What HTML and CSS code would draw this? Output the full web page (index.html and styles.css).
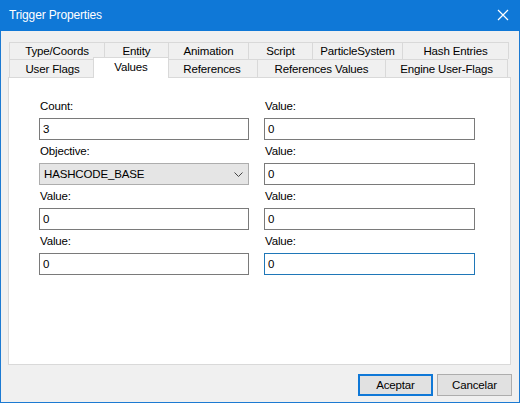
FILE: index.html
```html
<!DOCTYPE html>
<html>
<head>
<meta charset="utf-8">
<link rel="stylesheet" href="styles.css">
</head>
<body>
<div class="window">
  <div class="titlebar">
    <span class="title">Trigger Properties</span>
    <svg class="close" width="12" height="12" viewBox="0 0 12 12"><path d="M1 1 L11 11 M11 1 L1 11" stroke="#fff" stroke-width="1.2" fill="none"/></svg>
  </div>
  <div class="client">
    <div class="tabs">
      <div class="tabrow row1">
        <div class="tab t96">Type/Coords</div>
        <div class="tab t64">Entity</div>
        <div class="tab t80">Animation</div>
        <div class="tab t64">Script</div>
        <div class="tab t90">ParticleSystem</div>
        <div class="tab t106">Hash Entries</div>
      </div>
      <div class="tabrow row2">
        <div class="tab t87">User Flags</div>
        <div class="tab t72 active">Values</div>
        <div class="tab t91">References</div>
        <div class="tab t128">References Values</div>
        <div class="tab t122">Engine User-Flags</div>
      </div>
    </div>
    <div class="panel">
      <div class="grid">
        <div class="field"><div class="label">Count:</div><div class="input">3</div></div>
        <div class="field"><div class="label">Value:</div><div class="input">0</div></div>
        <div class="field"><div class="label">Objective:</div><div class="select"><span>HASHCODE_BASE</span><svg width="9" height="5" viewBox="0 0 9 5"><path d="M0.5 0.5 L4.5 4.5 L8.5 0.5" stroke="#444" stroke-width="1" fill="none"/></svg></div></div>
        <div class="field"><div class="label">Value:</div><div class="input">0</div></div>
        <div class="field"><div class="label">Value:</div><div class="input">0</div></div>
        <div class="field"><div class="label">Value:</div><div class="input">0</div></div>
        <div class="field"><div class="label">Value:</div><div class="input">0</div></div>
        <div class="field"><div class="label">Value:</div><div class="input focus">0</div></div>
      </div>
    </div>
    <div class="buttons">
      <div class="btn default">Aceptar</div>
      <div class="btn">Cancelar</div>
    </div>
  </div>
</div>
</body>
</html>
```

FILE: styles.css
```css
html, body {
  margin: 0;
  padding: 0;
  background: #f0f0f0;
}
body {
  font-family: "Liberation Sans", Arial, sans-serif;
  font-size: 11.5px;
  letter-spacing: -0.15px;
  color: #000;
}
.window {
  width: 520px;
  height: 403px;
  box-sizing: border-box;
  border: 1px solid #1c7ad2;
  border-top: none;
  display: flex;
  flex-direction: column;
  background: #f0f0f0;
}
.titlebar {
  height: 30px;
  flex: none;
  background: #0f78d7;
  color: #fff;
  display: flex;
  align-items: center;
  justify-content: space-between;
  padding: 0 9px 1px 9px;
  margin: 0 -1px;
  font-size: 12px;
}
.close {
  margin-right: 2px;
}
.client {
  flex: 1;
  display: flex;
  flex-direction: column;
  padding: 11px 8px 0 7px;
}
.tabs {
  display: flex;
  flex-direction: column;
  padding-left: 1px;
  position: relative;
  z-index: 1;
}
.tabrow {
  display: flex;
}
.row1 {
  height: 17px;
}
.row2 {
  height: 18px;
}
.tab {
  box-sizing: border-box;
  border: 1px solid #d9d9d9;
  border-bottom: none;
  margin-left: -1px;
  background: #f0f0f0;
  display: flex;
  align-items: center;
  justify-content: center;
  white-space: nowrap;
}
.tab:first-child {
  margin-left: 0;
}
.tab.active {
  background: #fff;
  height: 21px;
  margin-top: -2px;
  margin-left: -3px;
  margin-right: -2px;
  width: 76px;
  position: relative;
  z-index: 2;
  padding-bottom: 3px;
}
.t64 { width: 65px; }
.t72 { width: 73px; }
.t80 { width: 81px; }
.t87 { width: 87px; }
.t90 { width: 91px; }
.t91 { width: 92px; }
.t96 { width: 96px; }
.t106 { width: 107px; }
.t122 { width: 123px; }
.t128 { width: 129px; }
.panel {
  height: 288px;
  box-sizing: border-box;
  border: 1px solid #d9d9d9;
  background: #fff;
  padding: 20px 0 0 30px;
}
.grid {
  display: grid;
  grid-template-columns: 210px 211px;
  column-gap: 15px;
  row-gap: 3px;
}
.label {
  height: 16px;
  line-height: 16px;
  margin-bottom: 4px;
  padding-left: 1px;
}
.input {
  height: 22px;
  box-sizing: border-box;
  border: 1px solid #7a7a7a;
  background: #fff;
  padding-left: 3px;
  line-height: 20px;
}
.input.focus {
  border-color: #1f77b8;
}
.select {
  height: 22px;
  box-sizing: border-box;
  border: 1px solid #adadad;
  background: #e5e5e5;
  display: flex;
  align-items: center;
  justify-content: space-between;
  padding: 0 5px 0 4px;
}
.buttons {
  display: flex;
  justify-content: flex-end;
  gap: 4px;
  margin-top: 9px;
  margin-right: -1px;
}
.btn {
  width: 75px;
  height: 22px;
  box-sizing: border-box;
  border: 1px solid #adadad;
  background: #e1e1e1;
  display: flex;
  align-items: center;
  justify-content: center;
}
.btn.default {
  border: 2px solid #0f78d7;
}
```
